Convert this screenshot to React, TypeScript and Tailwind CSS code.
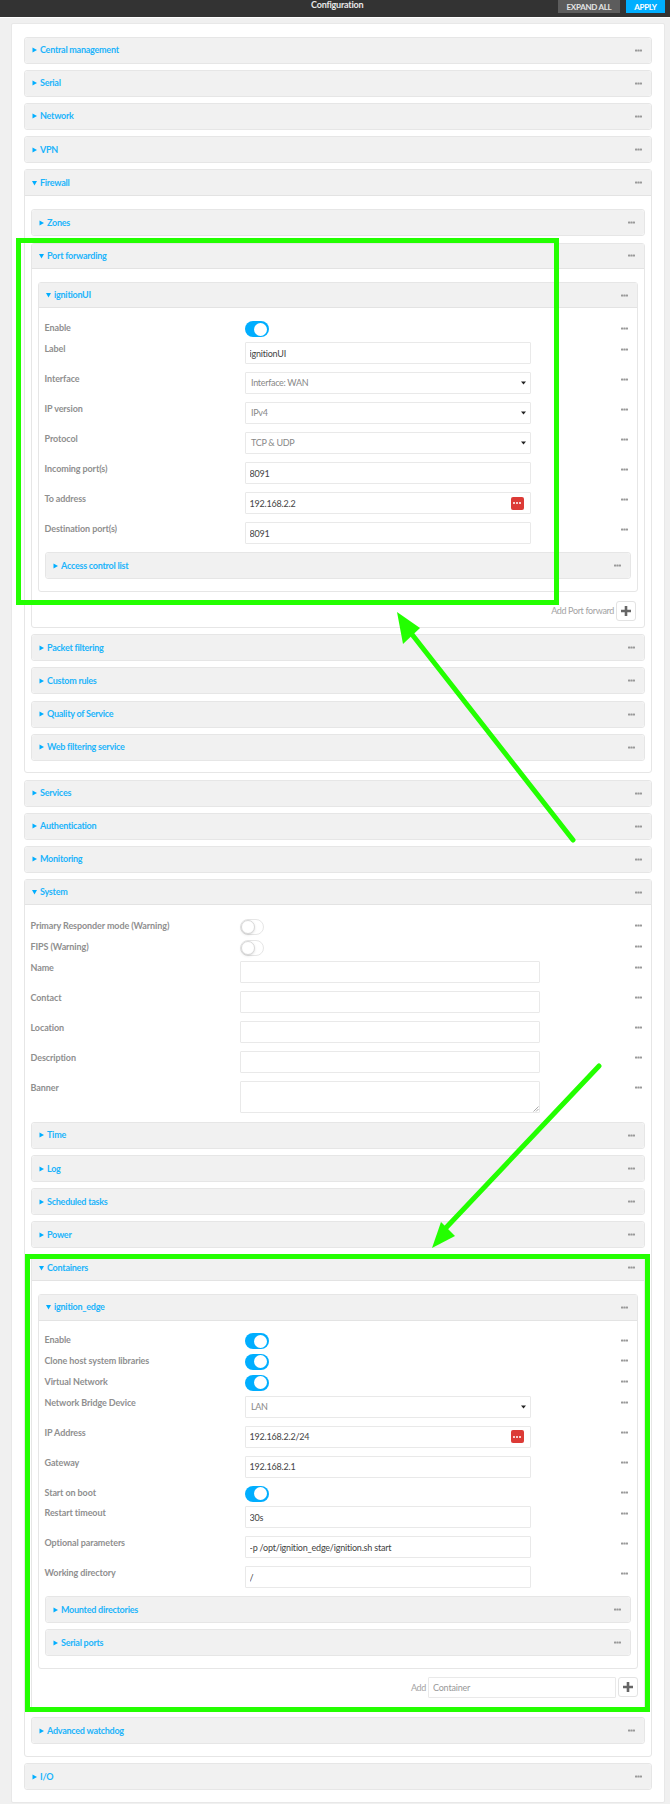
import React from "react";

const FONT = "font-['Lato','Noto_Sans',sans-serif]";

const Dash: React.FC<{ className?: string }> = ({ className }) => (
  <svg width="7" height="3" viewBox="0 0 7 3" className={className}>
    <rect x="0" y="0.5" width="2.2" height="2" rx="0.5" fill="#999" />
    <rect x="2.4" y="0.5" width="2.2" height="2" rx="0.5" fill="#999" />
    <rect x="4.8" y="0.5" width="2.2" height="2" rx="0.5" fill="#999" />
  </svg>
);

const Caret: React.FC<{ open?: boolean }> = ({ open }) => (
  <svg width="5" height="6" viewBox="0 0 5 6" className="shrink-0">
    {open ? <path d="M0 1h5L2.5 5.5z" fill="#00aeff" /> : <path d="M0.5 0.5v5L5 3z" fill="#00aeff" />}
  </svg>
);

type SectionProps = {
  title: string;
  open?: boolean;
  className?: string;
  children?: React.ReactNode;
};

const Section: React.FC<SectionProps> = ({ title, open, className, children }) => (
  <div className={`mb-[6.15px] rounded-[3px] border border-[#e6e6e6] bg-white ${className ?? ""}`}>
    <div className={`flex items-center bg-[#f1f1f1] pr-[9px] pl-[7px] ${open ? "h-[25.5px] border-b border-[#e3e3e3]" : "h-[25px] rounded-[3px]"}`}>
      <Caret open={open} />
      <span className="ml-[3.5px] text-[9px] leading-[14px] font-bold tracking-[-0.25px] text-[#1cb4fb]">{title}</span>
      <Dash className="ml-auto" />
    </div>
    {open && children}
  </div>
);

const Toggle: React.FC<{ on?: boolean }> = ({ on }) =>
  on ? (
    <div className="flex h-[16px] w-[24px] items-center justify-end rounded-full bg-[#00aeff] pr-[1.5px]">
      <div className="h-[13px] w-[13px] rounded-full bg-white" />
    </div>
  ) : (
    <div className="flex h-[16px] w-[24px] items-center rounded-full border border-[#e6e6e6] bg-white">
      <div className="h-[14px] w-[14px] rounded-full border border-[#d8d8d8] bg-white shadow-sm" />
    </div>
  );

const TextField: React.FC<{ value?: string; placeholder?: string; red?: boolean; className?: string }> = ({ value, placeholder, red, className }) => (
  <div className={`relative ${className ?? "h-[22px]"}`}>
    <input
      readOnly
      value={value ?? ""}
      placeholder={placeholder}
      className="block h-full w-full rounded-[1px] border-[1.5px] border-[#e9e9e9] bg-white px-[4px] text-[9px] tracking-[-0.2px] text-[#444] outline-none placeholder:text-[#999]"
    />
    {red && (
      <div className="absolute top-[4.5px] right-[7.5px] flex h-[13px] w-[13px] items-center justify-center gap-[1px] rounded-[2px] bg-[#dc3a36]">
        <span className="h-[2px] w-[2px] rounded-full bg-white" />
        <span className="h-[2px] w-[2px] rounded-full bg-white" />
        <span className="h-[2px] w-[2px] rounded-full bg-white" />
      </div>
    )}
  </div>
);

const SelectField: React.FC<{ value: string }> = ({ value }) => (
  <div className="flex h-[22px] items-center justify-between rounded-[1px] border-[1.5px] border-[#e9e9e9] bg-white pr-[4px] pl-[5.5px] text-[9px] tracking-[-0.3px] text-[#888]">
    <span>{value}</span>
    <svg width="5" height="4" viewBox="0 0 5 4">
      <path d="M0 0.5h5L2.5 3.5z" fill="#222" />
    </svg>
  </div>
);

type RowProps = {
  label: string;
  h: string;
  labelW: string;
  controlW: string;
  children?: React.ReactNode;
};

const Row: React.FC<RowProps> = ({ label, h, labelW, controlW, children }) => (
  <div className={`flex items-start ${h}`}>
    <div className={`${labelW} shrink-0 text-[9px] leading-[14px] font-bold tracking-[-0.1px] text-[#8f8f8f]`}>{label}</div>
    <div className={`${controlW} shrink-0`}>{children}</div>
    <Dash className="mt-[5.5px] mr-[3px] ml-auto" />
  </div>
);

// rows inside nested items (ignitionUI, ignition_edge)
const ItemRow: React.FC<{ label: string; toggle?: boolean; children?: React.ReactNode }> = ({ label, toggle, children }) => (
  <Row label={label} h={toggle ? "h-[20.8px]" : "h-[30px]"} labelW="w-[200px]" controlW="w-[286.5px]">
    {children}
  </Row>
);

// rows directly in the System panel
const SysRow: React.FC<{ label: string; toggle?: boolean; tall?: boolean; children?: React.ReactNode }> = ({ label, toggle, tall, children }) => (
  <Row
    label={label}
    h={toggle ? "h-[21px]" : tall ? "h-[41.3px]" : "h-[30px]"}
    labelW="w-[209.5px]"
    controlW="w-[299.7px]"
  >
    {children}
  </Row>
);

const PlusButton: React.FC = () => (
  <div className="flex h-[20px] w-[20px] items-center justify-center rounded-[3px] border border-[#e3e3e3] bg-white">
    <svg width="10" height="10" viewBox="0 0 10 10">
      <path d="M3.7 0h2.6v3.7H10v2.6H6.3V10H3.7V6.3H0V3.7h3.7z" fill="#666" />
    </svg>
  </div>
);

const GreenArrow: React.FC<{ x1: number; y1: number; x2: number; y2: number; head: string }> = ({ x1, y1, x2, y2, head }) => (
  <>
    <line x1={x1} y1={y1} x2={x2} y2={y2} stroke="#23ff00" strokeWidth="5" strokeLinecap="round" />
    <polygon points={head} fill="#23ff00" />
  </>
);

export default function App() {
  return (
    <div className={`relative h-[1804px] w-[670px] overflow-hidden bg-[#f0f0f0] ${FONT}`}>
      {/* top bar */}
      <header className="relative flex h-[18px] items-start justify-end border-b border-white bg-[#333333]">
        <span className="absolute top-[-2px] left-[311px] text-[9px] leading-[14px] font-bold tracking-[-0.2px] text-[#e8e8e8]">Configuration</span>
        <div className="flex h-[13px] w-[62px] items-center justify-center bg-[#5c5c5c] text-[8px] font-bold tracking-[-0.3px] text-[#e5e5e5]">EXPAND ALL</div>
        <div className="mr-[5px] ml-[6px] flex h-[13px] w-[39px] items-center justify-center bg-[#00aeff] text-[8px] font-bold tracking-[-0.3px] text-white">APPLY</div>
      </header>

      <main className="mt-[5.3px] mr-[5.5px] ml-[11px] h-[1779.5px] rounded-[2px] border border-[#e8e8e8] bg-white px-[11.5px] pt-[12.4px]">
        <Section title="Central management" className="h-[27px]" />
        <Section title="Serial" className="h-[27px]" />
        <Section title="Network" className="h-[27px]" />
        <Section title="VPN" className="h-[27px]" />

        <Section title="Firewall" open>
          <div className="px-[6px] pt-[13.7px] pb-[5.5px]">
            <Section title="Zones" className="h-[27px]" />
            <Section title="Port forwarding" open>
              <div className="px-[6px] pt-[12.8px] pb-[6.5px]">
                <Section title="ignitionUI" open className="!mb-0">
                  <div className="px-[6px] pt-[13px] pb-[5.4px]">
                    <ItemRow label="Enable" toggle><Toggle on /></ItemRow>
                    <ItemRow label="Label"><TextField value="ignitionUI" /></ItemRow>
                    <ItemRow label="Interface"><SelectField value="Interface: WAN" /></ItemRow>
                    <ItemRow label="IP version"><SelectField value="IPv4" /></ItemRow>
                    <ItemRow label="Protocol"><SelectField value="TCP & UDP" /></ItemRow>
                    <ItemRow label="Incoming port(s)"><TextField value="8091" /></ItemRow>
                    <ItemRow label="To address"><TextField value="192.168.2.2" red /></ItemRow>
                    <ItemRow label="Destination port(s)"><TextField value="8091" /></ItemRow>
                    <Section title="Access control list" className="h-[27px]" />
                  </div>
                </Section>
                <div className="mt-[9px] flex items-center justify-end pr-[2px] text-[9px] tracking-[-0.35px] text-[#a3a3a3]">
                  <span className="mr-[2px]">Add Port forward</span>
                  <PlusButton />
                </div>
              </div>
            </Section>
            <Section title="Packet filtering" className="h-[27px]" />
            <Section title="Custom rules" className="h-[27px]" />
            <Section title="Quality of Service" className="h-[27px]" />
            <Section title="Web filtering service" className="h-[27px]" />
          </div>
        </Section>

        <Section title="Services" className="h-[27px]" />
        <Section title="Authentication" className="h-[27px]" />
        <Section title="Monitoring" className="h-[27px]" />

        <Section title="System" open>
          <div className="px-[6px] pt-[13.2px] pb-[6px]">
            <SysRow label="Primary Responder mode (Warning)" toggle><Toggle /></SysRow>
            <SysRow label="FIPS (Warning)" toggle><Toggle /></SysRow>
            <SysRow label="Name"><TextField /></SysRow>
            <SysRow label="Contact"><TextField /></SysRow>
            <SysRow label="Location"><TextField /></SysRow>
            <SysRow label="Description"><TextField /></SysRow>
            <SysRow label="Banner" tall>
              <div className="relative h-[32px] rounded-[1px] border-[1.5px] border-[#e9e9e9] bg-white">
                <svg width="6" height="6" viewBox="0 0 6 6" className="absolute right-0 bottom-0">
                  <path d="M0.5 5.5L5.5 0.5M3 5.5L5.5 3" stroke="#888" strokeWidth="0.7" />
                </svg>
              </div>
            </SysRow>
            <Section title="Time" className="h-[27px]" />
            <Section title="Log" className="h-[27px]" />
            <Section title="Scheduled tasks" className="h-[27px]" />
            <Section title="Power" className="h-[27px]" />
            <Section title="Containers" open>
              <div className="px-[6px] pt-[13.1px] pb-[12.2px]">
                <Section title="ignition_edge" open className="!mb-0">
                  <div className="px-[6px] pt-[12.5px] pb-[5.5px]">
                    <ItemRow label="Enable" toggle><Toggle on /></ItemRow>
                    <ItemRow label="Clone host system libraries" toggle><Toggle on /></ItemRow>
                    <ItemRow label="Virtual Network" toggle><Toggle on /></ItemRow>
                    <ItemRow label="Network Bridge Device"><SelectField value="LAN" /></ItemRow>
                    <ItemRow label="IP Address"><TextField value="192.168.2.2/24" red /></ItemRow>
                    <ItemRow label="Gateway"><TextField value="192.168.2.1" /></ItemRow>
                    <ItemRow label="Start on boot" toggle><Toggle on /></ItemRow>
                    <ItemRow label="Restart timeout"><TextField value="30s" /></ItemRow>
                    <ItemRow label="Optional parameters"><TextField value="-p /opt/ignition_edge/ignition.sh start" /></ItemRow>
                    <ItemRow label="Working directory"><TextField value="/" /></ItemRow>
                    <Section title="Mounted directories" className="h-[27px]" />
                    <Section title="Serial ports" className="h-[27px]" />
                  </div>
                </Section>
                <div className="mt-[7.7px] flex items-center justify-end text-[9px] tracking-[-0.35px] text-[#a3a3a3]">
                  <span className="mr-[2px]">Add</span>
                  <TextField placeholder="Container" className="h-[21px] w-[188px]" />
                  <div className="ml-[2px]"><PlusButton /></div>
                </div>
              </div>
            </Section>
            <Section title="Advanced watchdog" className="h-[27px]" />
          </div>
        </Section>

        <Section title="I/O" className="h-[27px]" />
      </main>

      {/* green annotations drawn over the screenshot */}
      <div className="absolute top-[238px] left-[16px] h-[367px] w-[543px] border-[5px] border-[#23ff00]" />
      <div className="absolute top-[1254px] left-[25px] h-[458px] w-[625px] border-[5px] border-[#23ff00]" />
      <svg width="670" height="1804" className="pointer-events-none absolute top-0 left-0">
        <GreenArrow x1={573} y1={840} x2={407} y2={628} head="397,612 420,628 403,644" />
        <GreenArrow x1={599} y1={1066} x2={442} y2={1232} head="432,1248 441,1222 455,1236" />
      </svg>
    </div>
  );
}
